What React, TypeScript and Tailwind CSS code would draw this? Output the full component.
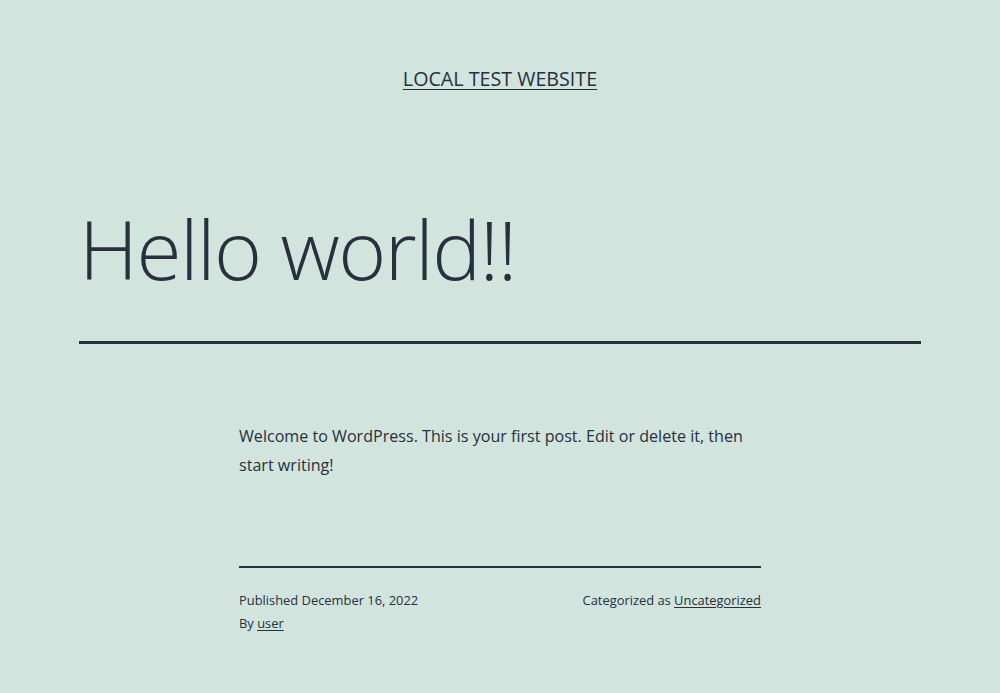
import React from "react";

export default function App() {
  const font = { fontFamily: '"Open Sans", "Noto Sans", sans-serif' };
  return (
    <div className="min-h-[693px] w-full bg-[#d1e4dd] text-[#28303d]" style={font}>
      <header className="pt-[64px] text-center">
        <a href="#" className="text-[19.7px] leading-[30px] uppercase underline decoration-1 underline-offset-[3px] text-[#28303d]">
          Local Test Website
        </a>
      </header>
      <main className="px-[79px]">
        <h1 className="mt-[104px] text-[82px] font-light leading-[100px] tracking-[-1.5px]">Hello world!!</h1>
        <div className="mt-[43px] h-[2.5px] bg-[#28303d]" />
        <div className="mx-auto w-[522px] pt-[78px]">
          <p className="text-[16.1px] leading-[29px]">
            Welcome to WordPress. This is your first post. Edit or delete it, then start writing!
          </p>
          <div className="mt-[86px] h-[2.5px] bg-[#28303d]" />
          <div className="mt-[21px] flex justify-between text-[12.9px] leading-[23px]">
            <div>
              <div>Published December 16, 2022</div>
              <div>
                By <a href="#" className="underline underline-offset-2">user</a>
              </div>
            </div>
            <div>
              Categorized as <a href="#" className="underline underline-offset-2">Uncategorized</a>
            </div>
          </div>
        </div>
      </main>
    </div>
  );
}
